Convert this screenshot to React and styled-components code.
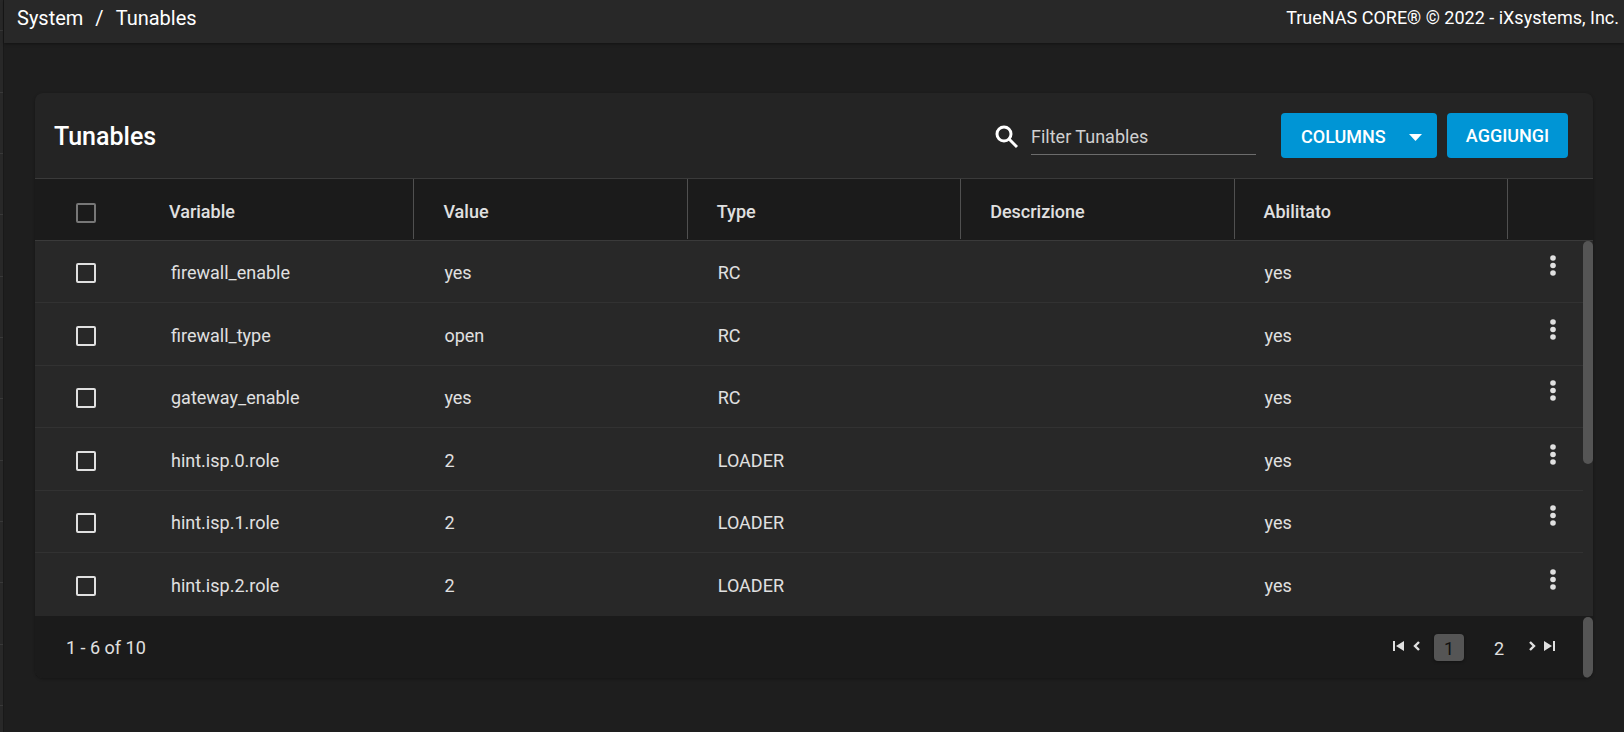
import { useState } from "react";
import styled, { createGlobalStyle } from "styled-components";

const GlobalStyle = createGlobalStyle`
  * {
    box-sizing: border-box;
  }

  body {
    margin: 0;
    background: #1e1e1e;
    color: #e0e0e0;
    font-family: Roboto, "Liberation Sans", sans-serif;
    font-size: 18px;
    line-height: 24px;
  }

  button, input {
    font: inherit;
    color: inherit;
  }
`;

const Page = styled.div`
  display: flex;
  min-height: 100vh;
`;

const SideNav = styled.nav`
  flex: none;
  width: 4px;
  height: 100vh;
  padding-top: 30px;
  background: #282828;
  border-right: 1px solid #191919;
  overflow: hidden;
`;

const NavEdge = styled.div`
  height: 61px;
  border-top: 1px solid #383838;

  &:nth-child(3n + 1) {
    height: 62px;
  }
`;

const Content = styled.div`
  flex: 1;
  min-width: 0;
`;

const TopBar = styled.header`
  display: flex;
  justify-content: space-between;
  height: 43px;
  padding: 6px 5px 0 13px;
  background: #282828;
  color: #fff;
  box-shadow: 0 1px 3px rgba(0, 0, 0, 0.4);
`;

const Breadcrumb = styled.nav`
  display: flex;
  gap: 12px;
  font-size: 20px;

  a {
    color: inherit;
    text-decoration: none;
  }
`;

const Card = styled.main`
  margin: 50px 31px;
  border-radius: 8px;
  background: #242424;
  box-shadow: 0 1px 3px rgba(0, 0, 0, 0.3);
  overflow: hidden;
`;

const CardHeader = styled.div`
  display: flex;
  align-items: center;
  height: 85px;
  padding: 0 25px 0 19px;
`;

const Title = styled.h1`
  flex: 1;
  margin: 0;
  padding-top: 2px;
  font-size: 25px;
  font-weight: 500;
  color: #fff;
`;

const Search = styled.label`
  display: flex;
  align-items: center;
  gap: 12px;
  padding-top: 3px;
  margin-right: 25px;
  color: #fff;
`;

const SearchInput = styled.input`
  width: 225px;
  height: 35px;
  padding: 0;
  border: none;
  border-bottom: 1px solid #6c6c6c;
  background: none;
  outline: none;

  &::placeholder {
    color: #d0d0d0;
    opacity: 1;
  }
`;

const Button = styled.button`
  display: flex;
  align-items: center;
  justify-content: ${(props) => (props.$menu ? "space-between" : "center")};
  width: ${(props) => (props.$menu ? "156px" : "121px")};
  height: 45px;
  padding: ${(props) => (props.$menu ? "3px 15px 0 20px" : "0")};
  border: none;
  border-radius: 4px;
  background: #0095d5;
  color: #fff;
  font-weight: 500;
  cursor: pointer;
`;

const Actions = styled.div`
  display: flex;
  gap: 10px;
`;

const TableWrap = styled.div`
  position: relative;
`;

const Table = styled.table`
  width: 100%;
  table-layout: fixed;
  border-collapse: separate;
  border-spacing: 0;
`;

const CheckCol = styled.col`
  width: 105px;
`;

const MenuCol = styled.col`
  width: 86px;
`;

const HeadCell = styled.th`
  height: 63px;
  padding: 0;
  border: solid #3a3a3a;
  border-width: 1px 0;
  background: #1b1b1b;
  text-align: left;
  vertical-align: top;
  font-weight: 500;
`;

const HeadLabel = styled.div`
  display: flex;
  align-items: center;
  height: 60px;
  padding: ${(props) => (props.$check ? "8px 0 0 41px" : "5px 0 0 29px")};
  border-left: ${(props) => (props.$line ? "1px solid #505050" : "none")};
`;

const Cell = styled.td`
  height: ${(props) => (props.$tall ? "63px" : "62px")};
  padding: ${(props) => (props.$tall ? "4px" : "2px")} 0 0 ${(props) => (props.$check ? "41px" : "31px")};
  border-bottom: 1px solid #323232;
  background: #282828;
  vertical-align: middle;

  tr:last-child > & {
    border-bottom-color: #282828;
  }
`;

const CheckBox = styled.input`
  appearance: none;
  display: block;
  width: 20px;
  height: 20px;
  margin: 0;
  border: 2px solid ${(props) => (props.$dim ? "#777" : "#e0e0e0")};
  border-radius: 2px;
  cursor: pointer;

  &:checked {
    border-color: #0095d5;
    background: #0095d5;
  }
`;

const MenuButton = styled.button`
  display: block;
  margin: 0 0 14px 2px;
  padding: 0;
  border: none;
  background: none;
  cursor: pointer;

  svg {
    display: block;
  }
`;

const ScrollBar = styled.div`
  position: absolute;
  top: 63px;
  right: 0;
  bottom: 0;
  width: 10px;
  background: #282828;
`;

const ScrollThumb = styled.div`
  height: ${(props) => props.$size};
  border-radius: 5px;
  background: #555;
`;

const Footer = styled.div`
  display: flex;
  align-items: center;
  height: 62px;
  padding-left: 31px;
  background: #1b1b1b;
`;

const Total = styled.div`
  flex: 1;
  padding-top: 2px;
`;

const Pager = styled.nav`
  display: flex;
  align-items: center;
  margin-right: 24px;
`;

const PageArrow = styled.button`
  width: ${(props) => (props.$wide ? "19px" : "16px")};
  height: 24px;
  margin-bottom: 3px;
  padding: 0;
  border: none;
  background: none;
  cursor: pointer;

  svg {
    display: block;
    margin: auto;
  }
`;

const PageNumber = styled.button`
  width: 30px;
  height: 27px;
  margin: 0 10px;
  padding: 3px 0 0;
  border: none;
  border-radius: 4px;
  background: ${(props) => (props.$current ? "#555" : "none")};
  box-shadow: ${(props) => (props.$current ? "0 1px 3px rgba(0, 0, 0, 0.4)" : "none")};
  color: ${(props) => (props.$current ? "#111" : "#e0e0e0")};
  cursor: pointer;
`;

const FooterScroll = styled.div`
  align-self: stretch;
  width: 10px;
  padding-top: 1px;
`;

const columns = ["Variable", "Value", "Type", "Descrizione", "Abilitato"];

const rows = [
  ["firewall_enable", "yes", "RC", "", "yes"],
  ["firewall_type", "open", "RC", "", "yes"],
  ["gateway_enable", "yes", "RC", "", "yes"],
  ["hint.isp.0.role", "2", "LOADER", "", "yes"],
  ["hint.isp.1.role", "2", "LOADER", "", "yes"],
  ["hint.isp.2.role", "2", "LOADER", "", "yes"],
];

const navEdges = Array.from({ length: 12 }, (_, i) => i);

function SearchIcon() {
  return (
    <svg width="24" height="24" viewBox="0 0 24 24" fill="none" stroke="currentColor">
      <circle cx="9" cy="9" r="7" strokeWidth="3" />
      <path d="M14 14l8 8" strokeWidth="3" />
    </svg>
  );
}

function DotsIcon() {
  return (
    <svg width="6" height="21" viewBox="0 0 6 21" fill="#e0e0e0">
      <circle cx="3" cy="3" r="2.8" />
      <circle cx="3" cy="10.5" r="2.8" />
      <circle cx="3" cy="18" r="2.8" />
    </svg>
  );
}

function ChevronIcon({ flip }) {
  return (
    <svg width="7" height="10" viewBox="0 0 7 10" fill="none" stroke="#e0e0e0" strokeWidth="2.4">
      <path d={flip ? "M1 1l4 4-4 4" : "M6 1L2 5l4 4"} />
    </svg>
  );
}

function EdgeIcon({ flip }) {
  return (
    <svg width="11" height="10" viewBox="0 0 11 10" fill="#e0e0e0">
      <path d={flip ? "M0 0l8 5-8 5zM9 0h2v10H9z" : "M11 0L3 5l8 5zM0 0h2v10H0z"} />
    </svg>
  );
}

export default function App() {
  const [filter, setFilter] = useState("");
  const [selected, setSelected] = useState([]);

  const visible = rows.filter((row) => row[0].includes(filter));

  const toggle = (name) => {
    setSelected(
      selected.includes(name) ? selected.filter((n) => n !== name) : [...selected, name]
    );
  };

  const toggleAll = () => {
    setSelected(selected.length === rows.length ? [] : rows.map((row) => row[0]));
  };

  return (
    <Page>
      <GlobalStyle />
      <SideNav>
        {navEdges.map((i) => (
          <NavEdge key={i} />
        ))}
      </SideNav>
      <Content>
        <TopBar>
          <Breadcrumb>
            <a href="#system">System</a>
            <span>/</span>
            <a href="#tunables">Tunables</a>
          </Breadcrumb>
          <span>TrueNAS CORE® © 2022 - iXsystems, Inc.</span>
        </TopBar>
        <Card>
          <CardHeader>
            <Title>Tunables</Title>
            <Search>
              <SearchIcon />
              <SearchInput
                aria-label="Filter Tunables"
                placeholder="Filter Tunables"
                value={filter}
                onChange={(e) => setFilter(e.target.value)}
              />
            </Search>
            <Actions>
              <Button $menu>
                COLUMNS
                <svg width="13" height="7" viewBox="0 0 13 7" fill="#fff">
                  <path d="M0 0h13L6.5 7z" />
                </svg>
              </Button>
              <Button>AGGIUNGI</Button>
            </Actions>
          </CardHeader>
          <TableWrap>
            <Table>
              <colgroup>
                <CheckCol />
                {columns.map((name) => (
                  <col key={name} />
                ))}
                <MenuCol />
              </colgroup>
              <thead>
                <tr>
                  <HeadCell>
                    <HeadLabel $check>
                      <CheckBox
                        $dim
                        type="checkbox"
                        aria-label="Select all"
                        checked={selected.length === rows.length}
                        onChange={toggleAll}
                      />
                    </HeadLabel>
                  </HeadCell>
                  {columns.map((name, i) => (
                    <HeadCell key={name}>
                      <HeadLabel $line={i > 0}>{name}</HeadLabel>
                    </HeadCell>
                  ))}
                  <HeadCell>
                    <HeadLabel $line />
                  </HeadCell>
                </tr>
              </thead>
              <tbody>
                {visible.map((row, i) => (
                  <tr key={row[0]}>
                    <Cell $check $tall={i % 2 === 1}>
                      <CheckBox
                        type="checkbox"
                        aria-label={row[0]}
                        checked={selected.includes(row[0])}
                        onChange={() => toggle(row[0])}
                      />
                    </Cell>
                    {row.map((value, j) => (
                      <Cell key={j} $tall={i % 2 === 1}>
                        {value}
                      </Cell>
                    ))}
                    <Cell $check $tall={i % 2 === 1}>
                      <MenuButton aria-label={`Options for ${row[0]}`}>
                        <DotsIcon />
                      </MenuButton>
                    </Cell>
                  </tr>
                ))}
              </tbody>
            </Table>
            <ScrollBar>
              <ScrollThumb $size="223px" />
            </ScrollBar>
          </TableWrap>
          <Footer>
            <Total>1 - 6 of 10</Total>
            <Pager aria-label="Pages">
              <PageArrow $wide aria-label="First page">
                <EdgeIcon />
              </PageArrow>
              <PageArrow aria-label="Previous page">
                <ChevronIcon />
              </PageArrow>
              <PageNumber $current>1</PageNumber>
              <PageNumber>2</PageNumber>
              <PageArrow aria-label="Next page">
                <ChevronIcon flip />
              </PageArrow>
              <PageArrow $wide aria-label="Last page">
                <EdgeIcon flip />
              </PageArrow>
            </Pager>
            <FooterScroll>
              <ScrollThumb $size="100%" />
            </FooterScroll>
          </Footer>
        </Card>
      </Content>
    </Page>
  );
}
